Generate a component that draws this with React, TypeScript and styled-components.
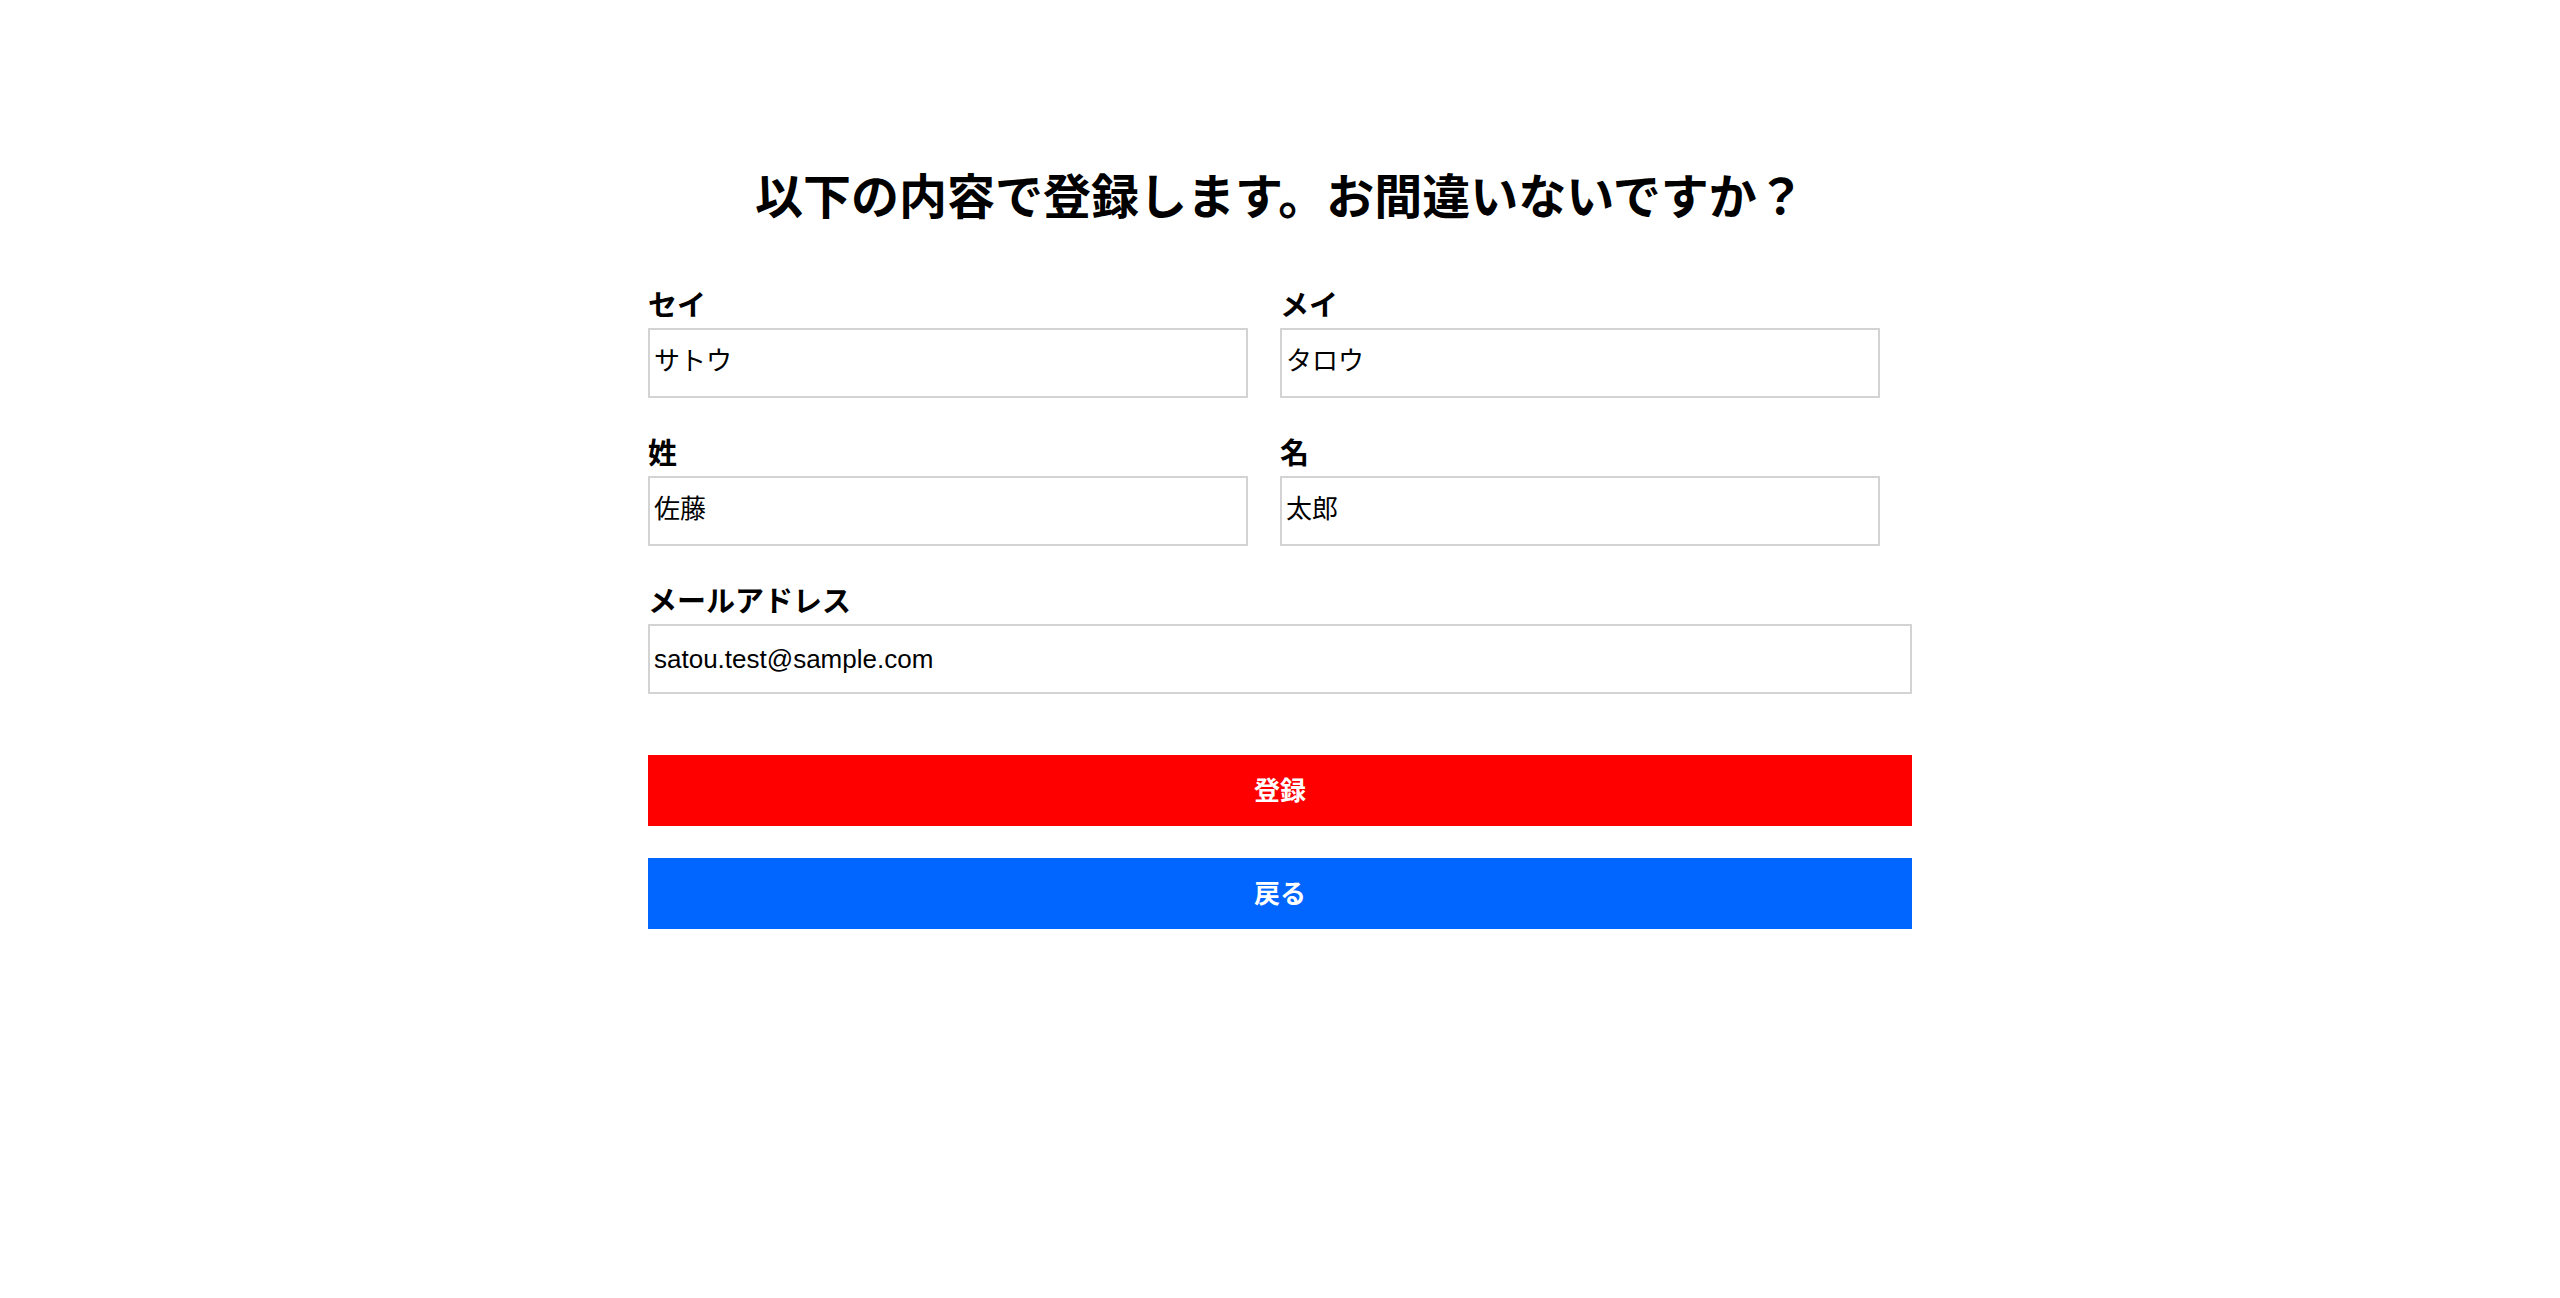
import React from "react";
import styled, { createGlobalStyle } from "styled-components";

const GlobalStyle = createGlobalStyle`
  body {
    margin: 0;
    background: #ffffff;
    color: #000000;
    font-family: "Noto Sans CJK JP", "Liberation Sans", sans-serif;
  }
`;

const Page = styled.div`
  width: 1264px;
  margin: 0 auto;
  padding-top: 164px;
`;

const Title = styled.h1`
  margin: 0 0 64px;
  font-size: 48px;
  line-height: 58px;
  font-weight: 700;
  text-align: center;
`;

const Grid = styled.div`
  display: grid;
  grid-template-columns: 1fr 1fr;
  row-gap: 36px;
`;

const Field = styled.div<{ $wide?: boolean }>`
  display: flex;
  flex-direction: column;
  gap: 7px;
  grid-column: ${(p) => (p.$wide ? "1 / -1" : "auto")};
`;

const Label = styled.label`
  font-size: 29px;
  line-height: 35px;
  font-weight: 700;
`;

// japanese values sit a little higher in the box than latin ones
const Input = styled.input<{ $wide?: boolean; $cjk?: boolean }>`
  box-sizing: border-box;
  width: ${(p) => (p.$wide ? "100%" : "95%")};
  height: 70px;
  padding: 0 4px ${(p) => (p.$cjk ? "9px" : "0")};
  border: 2px solid #d3d3d3;
  border-radius: 0;
  background: #ffffff;
  color: #000000;
  font-family: "Liberation Sans", "Noto Sans CJK JP", sans-serif;
  font-size: 26px;
  outline: none;
`;

const Buttons = styled.div`
  display: flex;
  flex-direction: column;
  gap: 32px;
  margin-top: 61px;
`;

const Button = styled.button<{ $color: string }>`
  width: 100%;
  height: 71px;
  padding: 0 0 5px;
  border: none;
  background: ${(p) => p.$color};
  color: #ffffff;
  font-family: "Noto Sans CJK JP", sans-serif;
  font-size: 26px;
  font-weight: 700;
  cursor: pointer;
`;

const fields = [
  { label: "セイ", value: "サトウ" },
  { label: "メイ", value: "タロウ" },
  { label: "姓", value: "佐藤" },
  { label: "名", value: "太郎" },
];

function App() {
  return (
    <>
      <GlobalStyle />
      <Page>
        <Title>以下の内容で登録します。お間違いないですか？</Title>
        <Grid>
          {fields.map((f) => (
            <Field key={f.label}>
              <Label>{f.label}</Label>
              <Input $cjk readOnly value={f.value} />
            </Field>
          ))}
          <Field $wide>
            <Label>メールアドレス</Label>
            <Input $wide readOnly value="satou.test@sample.com" />
          </Field>
        </Grid>
        <Buttons>
          <Button $color="#ff0000">登録</Button>
          <Button $color="#0066ff">戻る</Button>
        </Buttons>
      </Page>
    </>
  );
}

export default App;
